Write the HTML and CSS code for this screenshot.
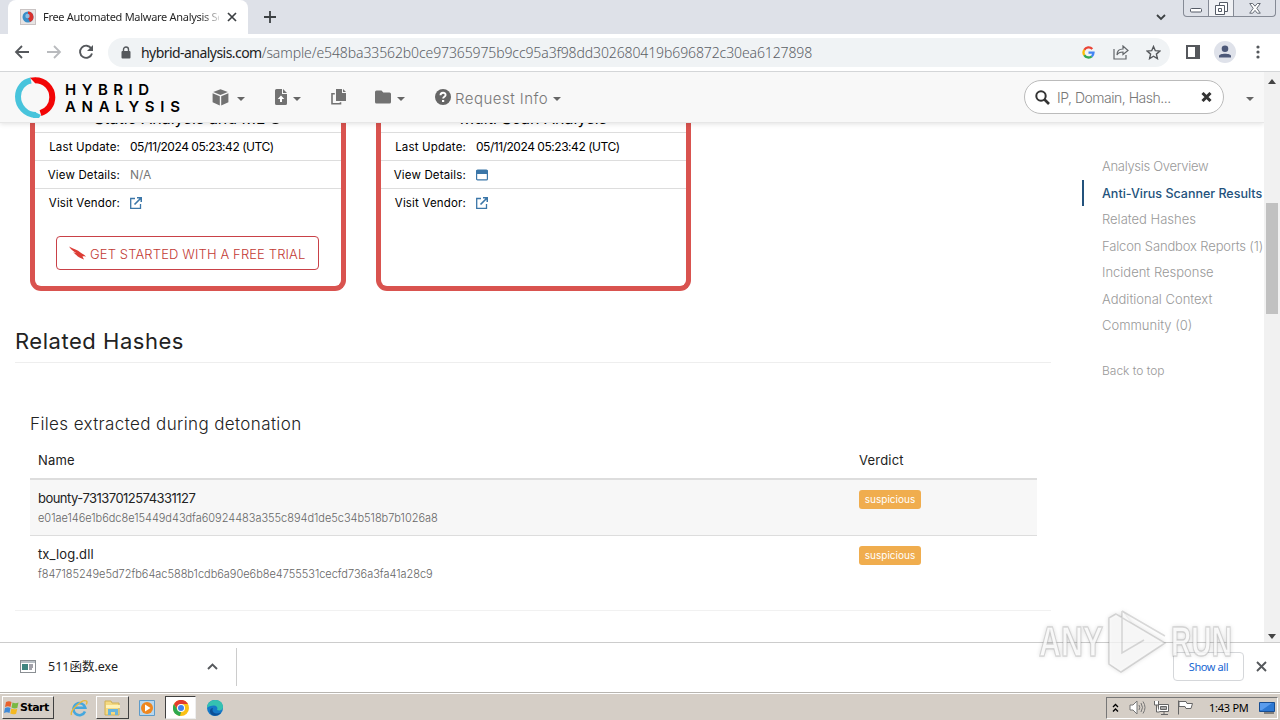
FILE: index.html
```html
<!DOCTYPE html>
<html lang="en">
<head>
    <meta charset="UTF-8">
    <meta name="viewport" content="width=device-width, initial-scale=1.0">
    <title>Free Automated Malware Analysis Service</title>
    <link rel="stylesheet" href="styles.css">
</head>
<body>
    <div class="tabs">
        <div class="tab">
            <svg class="favicon" width="16" height="16" viewBox="0 0 16 16"><rect x=".5" y=".5" width="15" height="15" fill="#e8e4e4" stroke="#c9c3c3"/><circle cx="8" cy="8" r="5.5" fill="#3a8fc8"/><path d="M8 2.500a5.500 5.500 0 0 1 2 10.600L8 9z" fill="#d9302c"/><circle cx="7.500" cy="7" r="2.200" fill="#8fbbe0"/></svg>
            <span class="tab-title">Free Automated Malware Analysis Se</span>
            <svg width="10" height="10" viewBox="0 0 10 10"><path d="M1 1l8 8M9 1l-8 8" stroke="#3c4043" stroke-width="1.700"/></svg>
        </div>
        <svg class="new-tab" width="12" height="12" viewBox="0 0 12 12"><path d="M6 0v12M0 6h12" stroke="#3c4043" stroke-width="1.800"/></svg>
        <svg class="tab-search" width="10" height="7" viewBox="0 0 10 7"><path d="M1 1l4 4 4-4" fill="none" stroke="#3c4043" stroke-width="1.800"/></svg>
        <div class="window-buttons">
            <span class="minimize"><svg width="12" height="5"><rect x=".5" y=".5" width="11" height="3.500" rx="1" fill="#fff" stroke="#555b66"/></svg></span>
            <span class="restore"><svg width="13" height="13" fill="#fff" stroke="#555b66"><path d="M4.500 3V.5h8v9H10"/><path d="M.5 3.500h9v9h-9z"/><path d="M3.500 6.500h3v3h-3z"/></svg></span>
            <span class="close"><svg width="12" height="11" viewBox="0 0 12 11"><path d="M.7.5h3L6 3.200 8.300.5h3L7.800 5.300l3.500 4.900h-3L6 7.400l-2.300 2.800h-3l3.500-4.900z" fill="#fff" stroke="#666c76"/></svg></span>
        </div>
    </div>

    <div class="toolbar">
        <svg class="back" width="16" height="14" viewBox="0 0 16 14" fill="none" stroke="#55585c" stroke-width="1.800"><path d="M15 7H2M8 1L2 7l6 6"/></svg>
        <svg class="forward" width="16" height="14" viewBox="0 0 16 14" fill="none" stroke="#b9bbbe" stroke-width="1.800"><path d="M1 7h13M8 1l6 6-6 6"/></svg>
        <svg class="reload" width="16" height="16" viewBox="0 0 16 16"><path d="M13.300 4.500A6.100 6.100 0 1 0 14 9.500" fill="none" stroke="#55585c" stroke-width="1.900"/><path d="M15 1v6H9z" fill="#55585c"/></svg>
        <div class="address">
            <svg width="10" height="13" viewBox="0 0 10 13"><path d="M2.500 6V3.500a2.500 2.500 0 0 1 5 0V6" fill="none" stroke="#55585c" stroke-width="1.400"/><rect x=".5" y="5" width="9" height="7.500" rx="1" fill="#55585c"/></svg>
            <span class="url"><b>hybrid-analysis.com</b>/sample/e548ba33562b0ce97365975b9cc95a3f98dd302680419b696872c30ea6127898</span>
            <svg class="google" width="13" height="13" viewBox="0 0 13 13" fill="none" stroke-width="2.300"><path d="M10.300 3A5 5 0 0 0 2.300 3.800" stroke="#ea4335"/><path d="M2.300 3.800a5 5 0 0 0 0 5.300" stroke="#fbbc05"/><path d="M2.300 9.100a5 5 0 0 0 7.500 1.200" stroke="#34a853"/><path d="M9.800 10.300a5 5 0 0 0 1.700-3.700H6.500" stroke="#4285f4"/></svg>
            <svg class="share" width="16" height="15" viewBox="0 0 16 15" fill="none" stroke="#62666a" stroke-width="1.200"><path d="M1 4v10h12v-4"/><path d="M4 10c0-4 2-6 6-6V1l5 4.500L10 9.500V7C7 7 5 8 4 10z"/></svg>
            <svg class="star" width="15" height="15" viewBox="0 0 15 15"><path d="M7.500 1.500l1.800 4.200 4.600.4-3.500 3 1 4.500-3.900-2.400-3.900 2.400 1-4.500-3.500-3 4.600-.4z" fill="none" stroke="#55585c" stroke-width="1.400"/></svg>
        </div>
        <svg class="side-panel" width="14" height="14"><path d="M1 1h12v12H1z" fill="none" stroke="#55585c" stroke-width="2"/><path d="M9 1h4v12H9z" fill="#55585c"/></svg>
        <svg class="avatar" width="22" height="22" viewBox="0 0 22 22"><circle cx="11" cy="11" r="11" fill="#dfe2ea"/><circle cx="11" cy="7.700" r="3.300" fill="#4c5878"/><path d="M5 16.500v-1.500c0-3 12-3 12 0v1.500z" fill="#4c5878"/></svg>
        <svg class="more" width="4" height="14" fill="#55585c"><circle cx="2" cy="2" r="1.600"/><circle cx="2" cy="7" r="1.600"/><circle cx="2" cy="12" r="1.600"/></svg>
    </div>

    <div class="viewport">
        <div class="page">
            <div class="navbar">
                <div class="brand">
                    <svg width="41" height="41" viewBox="0 0 41 41"><path d="M16 3.500C8 5 3 12 3 19.500 3 29.500 11 38 21 38" fill="none" stroke="#48c4dc" stroke-width="6"/><path d="M20 35l6 3-2 3h-6z" fill="#48c4dc"/><path d="M20 3.200c10 0 17.300 7.800 17.300 17 0 7.600-4.800 13.800-11.800 16" fill="none" stroke="#f20506" stroke-width="6"/><path d="M15 .8L20.200.2v6z" fill="#f20506"/></svg>
                    <div class="brand-name"><div class="hybrid">HYBRID</div><div class="analysis">ANALYSIS</div></div>
                </div>
                <div class="nav-item cube">
                    <svg width="17" height="17" viewBox="0 0 17 17" fill="#727272"><path d="M8.500.3l7.300 2.800-7.300 3-7.300-3z"/><path d="M.6 4.300l7.200 3v9.200L.6 13.300zM16.400 4.300l-7.200 3v9.200l7.200-3.200z"/></svg><i class="caret"></i>
                </div>
                <div class="nav-item upload">
                    <svg width="12" height="16" viewBox="0 0 12 16"><path d="M1.500 0H7v5h5v9.500q0 1.500-1.500 1.500h-9Q0 16 0 14.500v-13Q0 0 1.500 0z" fill="#727272"/><path d="M8 0l4 4H8z" fill="#727272"/><path d="M6 6.500l3.300 3.600H7V13H5v-2.900H2.700z" fill="#fff"/></svg><i class="caret"></i>
                </div>
                <div class="nav-item copy">
                    <svg width="15" height="16" viewBox="0 0 15 16"><path d="M5 0h6v4h4v8H5z" fill="#727272"/><path d="M12 0l3 3h-3z" fill="#727272"/><path d="M3.800 4.700H1v10h8.500v-1.500" fill="none" stroke="#727272" stroke-width="1.600"/></svg>
                </div>
                <div class="nav-item folder">
                    <svg width="16" height="14" viewBox="0 0 16 14"><path d="M1.500.5h5L8.300 2.500h6.200q1.500 0 1.500 1.500v8q0 1.500-1.500 1.500h-13Q0 13.500 0 12V2Q0 .5 1.500.5z" fill="#727272"/></svg><i class="caret"></i>
                </div>
                <div class="nav-item request">
                    <svg width="16" height="16" viewBox="0 0 16 16"><circle cx="8" cy="8" r="8" fill="#666"/><path d="M5.500 6.200C5.500 3 10.600 3 10.600 6 10.600 7.800 8.100 7.600 8.100 9.600" fill="none" stroke="#fff" stroke-width="1.900"/><path d="M7 11h2.200v2H7z" fill="#fff"/></svg><span>Request Info</span><i class="caret"></i>
                </div>
                <div class="search">
                    <svg width="15" height="15" viewBox="0 0 15 15" fill="none" stroke="#333"><circle cx="6" cy="6" r="4.700" stroke-width="2"/><path d="M9.500 9.500l4.500 4.500" stroke-width="2.600"/></svg>
                    <span>IP, Domain, Hash...</span>
                    <svg width="11" height="10" viewBox="0 0 11 10"><path d="M1.500 1l8 8M9.500 1l-8 8" stroke="#333" stroke-width="3"/></svg>
                </div>
                <i class="caret user-caret"></i>
            </div>

            <div class="scroll-area">
                <div class="content">
                    <div class="cards">
                        <div class="card">
                            <div class="card-title">Static Analysis and ML <svg width="13" height="13"><circle cx="6.500" cy="6.500" r="6.500"/></svg></div>
                            <div class="row"><span class="label">Last Update:</span><span class="date">05/11/2024 05:23:42 (UTC)</span></div>
                            <div class="row"><span class="label">View Details:</span><span class="none">N/A</span></div>
                            <div class="row"><span class="label">Visit Vendor:</span><svg width="12" height="12" viewBox="0 0 12 12" fill="none" stroke="#3b76a8" stroke-width="1.300"><path d="M5 1.500H.7v9.800h9.800V7"/><path d="M4.500 7.500L11 1M7 .7h4.300V5" stroke-width="1.600"/></svg></div>
                            <div class="trial"><svg width="17" height="14" viewBox="0 0 17 14" fill="#dc3c35"><path d="M0 .5c5 2.500 8.500 3.500 11.500 6 1.500 1.500 3.500 1.500 5.500 4.300-2-.7-3-.6-3.500-.3L15 13.500c-2.500-1.500-4.500-1.500-6.500-3.300C7 8.800 6 8 4 6c1.500.8 2.500 1 3.500 1.200C5 5.500 2 4 0 .5z"/></svg><span>GET STARTED WITH A FREE TRIAL</span></div>
                        </div>
                        <div class="card">
                            <div class="card-title">Multi Scan Analysis</div>
                            <div class="row"><span class="label">Last Update:</span><span class="date">05/11/2024 05:23:42 (UTC)</span></div>
                            <div class="row"><span class="label">View Details:</span><svg width="12" height="12" viewBox="0 0 12 12"><rect x=".6" y="1.100" width="10.800" height="9.800" rx="1" fill="#fff" stroke="#3b76a8" stroke-width="1.200"/><path d="M.5 1h11v4H.5z" fill="#3b76a8"/></svg></div>
                            <div class="row"><span class="label">Visit Vendor:</span><svg width="12" height="12" viewBox="0 0 12 12" fill="none" stroke="#3b76a8" stroke-width="1.300"><path d="M5 1.500H.7v9.800h9.800V7"/><path d="M4.500 7.500L11 1M7 .7h4.300V5" stroke-width="1.600"/></svg></div>
                        </div>
                    </div>

                    <h2>Related Hashes</h2>
                    <div class="hashes">
                        <h3>Files extracted during detonation</h3>
                        <div class="table-row head"><div>Name</div><div>Verdict</div></div>
                        <div class="table-row striped">
                            <div><div class="file">bounty-73137012574331127</div><div class="hash">e01ae146e1b6dc8e15449d43dfa60924483a355c894d1de5c34b518b7b1026a8</div></div>
                            <div><span class="badge">suspicious</span></div>
                        </div>
                        <div class="table-row">
                            <div><div class="file dll">tx_log.dll</div><div class="hash">f847185249e5d72fb64ac588b1cdb6a90e6b8e4755531cecfd736a3fa41a28c9</div></div>
                            <div><span class="badge">suspicious</span></div>
                        </div>
                    </div>
                </div>

                <div class="side-nav">
                    <div class="link overview">Analysis Overview</div>
                    <div class="link active">Anti-Virus Scanner Results</div>
                    <div class="link">Related Hashes</div>
                    <div class="link reports">Falcon Sandbox Reports (1)</div>
                    <div class="link">Incident Response</div>
                    <div class="link">Additional Context</div>
                    <div class="link">Community (0)</div>
                    <div class="top">Back to top</div>
                </div>
            </div>
        </div>
        <div class="scrollbar">
            <svg width="8" height="5"><path d="M0 5l4-5 4 5z" fill="#444"/></svg>
            <div class="thumb"></div>
            <svg width="8" height="5"><path d="M0 0l4 5 4-5z" fill="#444"/></svg>
        </div>
    </div>

    <div class="downloads">
        <div class="download">
            <svg width="16" height="13"><rect x=".5" y=".5" width="15" height="12" fill="#fff" stroke="#8a8f93"/><path d="M1 1h14v2H1z" fill="#b9c0c6"/><path d="M2 4h6v6H2z" fill="#3f8580"/><path d="M9 5h4M9 7h4M9 9h3" stroke="#445"/></svg>
            <span>511函数.exe</span>
            <svg width="11" height="7" viewBox="0 0 11 7"><path d="M1 6l4.500-4.500L10 6" fill="none" stroke="#55585c" stroke-width="1.900"/></svg>
        </div>
        <div class="show-all">Show all</div>
        <svg width="11" height="11" viewBox="0 0 11 11"><path d="M1 1l9 9M10 1l-9 9" stroke="#55585c" stroke-width="1.900"/></svg>
    </div>

    <div class="taskbar">
        <div class="start">
            <svg width="16" height="16" viewBox="0 0 16 16"><path d="M2 2q3-1.500 5.500 0L6.500 7Q4 5.500 1 7z" fill="#e8612c"/><path d="M8.500 2.500q3 1.500 6 0L13.300 8q-3 1-5.800-.5z" fill="#79b843"/><path d="M1 8q3-1.300 5.500 0l-1 5Q3 11.700 0 13z" fill="#3f8ad8"/><path d="M7.300 8.500q3 1.500 6 .3l-1.200 5q-3 1.200-5.800-.3z" fill="#f5b921"/></svg>
            <b>Start</b>
        </div>
        <div class="task ie"><svg width="18" height="18" viewBox="0 0 18 18" fill="none"><path d="M15 12.500A6 6 0 1 1 15.300 8.800H4" stroke="#45a7de" stroke-width="2.600"/><path d="M1.500 16C-.5 12 12-.5 16.500 2c1 .7.5 2-.2 3.500" stroke="#e8b83a" stroke-width="1.400"/></svg></div>
        <div class="task raised"><svg width="17" height="17" viewBox="0 0 17 17"><path d="M1 2h6l1 2h7v12H1z" fill="#f4d981" stroke="#cfb057"/><path d="M2 6h14v3H2z" fill="#fff3b8"/><path d="M4 16v-6h10v6h-3v-3H7v3z" fill="#69b5dd"/></svg></div>
        <div class="task media"><svg width="16" height="16"><path d="M.5.5h15v15H.5z" fill="#b8d7ee" stroke="#5e9bc9"/><circle cx="8" cy="8" r="6" fill="#ef871f"/><path d="M6 4.500l5.500 3.500L6 11.500z" fill="#fff"/></svg></div>
        <div class="task pressed"><svg width="16" height="16" viewBox="0 0 16 16"><circle cx="8" cy="8" r="8" fill="#fbc116"/><path d="M1 4a8 8 0 0 1 14 0H8L5 10z" fill="#e33b2e"/><path d="M1 4l3.700 6.200L8 12l-1 4A8 8 0 0 1 1 4z" fill="#2da94f"/><circle cx="8" cy="8" r="4" fill="#fff"/><circle cx="8" cy="8" r="3" fill="#4182ed"/></svg></div>
        <div class="task edge"><svg width="16" height="16" viewBox="0 0 16 16"><circle cx="8" cy="8" r="8" fill="#1679c8"/><path d="M0 8C0-2.500 16-2.500 16 7c0 3-3 4-6 3 1-2 0-4.500-3-4.500C4 5.500 1 6.500 0 8z" fill="#35c1b1"/><path d="M6 8c-2 4 2 7 8 4.500C11 17 4 17 3 12c-.4-2 1-4 3-4z" fill="#0d4f96"/></svg></div>
        <div class="tray">
            <svg class="chevrons" width="7" height="10" fill="none" stroke="#000" stroke-width="1.300"><path d="M1 4l2.500-2.500L6 4M1 8.500L3.500 6 6 8.500"/></svg>
            <svg class="sound" width="17" height="15" viewBox="0 0 17 15" fill="none" stroke="#777"><path d="M1 5h3l4-4v13l-4-4H1z" fill="#fff"/><path d="M10 5q1.500 2.500 0 5M12 3q3 4.500 0 9M14 1.500q4 6 0 12"/></svg>
            <svg class="network" width="17" height="16" fill="#fff" stroke="#666"><path d="M5.500 4.500h10v7h-10z"/><path d="M7.500 6.500h6v3h-6z" fill="#aaa"/><path d="M1.500 1v4h4V1M3.500 5v7h3M8 14.500h7M11 12v2"/></svg>
            <svg class="flag" width="17" height="15" fill="#fff" stroke="#666"><path d="M1.500.5v14M2 1.500h7l1 2h5.500l-1.500 5H9l-1-2H2z"/></svg>
            <span>1:43 PM</span>
            <svg class="desktop" width="16" height="12"><path d="M.5.5h15v9H.5z" fill="#2d78d3" stroke="#174d92"/><path d="M1 1h12L3 8H1z" fill="#5a9ced"/><path d="M5 11h10" stroke="#333"/></svg>
        </div>
    </div>

    <svg class="watermark" width="204" height="70" viewBox="0 0 204 70">
        <text x="5" y="50" textLength="64" lengthAdjust="spacingAndGlyphs">ANY</text>
        <path d="M82 8L75 12v46l12 8 44-29z M88 5v42l22-13M88 5l43 25"/>
        <text x="137" y="50" textLength="61" lengthAdjust="spacingAndGlyphs">RUN</text>
    </svg>
</body>
</html>
```
FILE: styles.css
```css
*
{
    box-sizing: border-box;
}
body
{
    margin: 0;
    width: 1280px;
    height: 720px;
    overflow: hidden;
    position: relative;
    background-color: #fff;
    font-family: Inter, "Noto Sans", sans-serif;
    color: #222;
}
svg
{
    flex: none;
    display: block;
}

/* Browser window */
.tabs
{
    height: 34px;
    background-color: #dee1e8;
    display: flex;
    align-items: center;
    padding-left: 8px;
}
.tab
{
    width: 240px;
    height: 34px;
    background-color: #fff;
    border-radius: 8px 8px 0 0;
    display: flex;
    align-items: center;
    padding: 0 11px 0 12px;
}
.tab-title
{
    font: 11px/16px "Noto Sans", sans-serif;
    letter-spacing: -0.29px;
    width: 176px;
    margin: 0 8px 0 7px;
    white-space: nowrap;
    overflow: hidden;
    flex: none;
    background-image: linear-gradient(90deg, #222 158px, #fff 180px);
    background-clip: text;
    color: transparent;
}
.new-tab
{
    margin-left: 16px;
}
.tab-search
{
    margin-left: auto;
}
.window-buttons
{
    display: flex;
    align-self: flex-start;
    width: 93px;
    height: 17px;
    margin: 0 4px 0 17px;
    border: 1px solid #858a95;
    border-top: none;
    border-radius: 0 0 4px 4px;
}
.window-buttons span
{
    display: flex;
    align-items: center;
    justify-content: center;
    width: 25px;
    border-right: 1px solid #858a95;
}
.window-buttons .minimize svg
{
    margin-top: 4px;
}
.window-buttons .restore
{
    background-color: #f0f1f4;
}
.window-buttons .close
{
    width: 41px;
    border: none;
}
.toolbar
{
    height: 38px;
    display: flex;
    align-items: center;
    padding: 0 20px 2px 14px;
    border-bottom: 1px solid #d4d6d8;
}
.forward
{
    margin-left: 16px;
}
.reload
{
    margin: 0 14px 0 16px;
}
.address
{
    flex: 1;
    height: 29px;
    border-radius: 15px;
    background-color: #f0f3f5;
    display: flex;
    align-items: center;
    padding: 0 9px 0 13px;
    margin-top: 2px;
}
.url
{
    font: 300 14px/20px "Noto Sans", sans-serif;
    letter-spacing: -0.11px;
    color: #5b6065;
    margin-left: 10px;
    white-space: nowrap;
}
.url b
{
    font-weight: 400;
    letter-spacing: -0.55px;
    color: #222;
}
.google
{
    margin-left: auto;
}
.share
{
    margin: 0 17px 0 18px;
}
.side-panel
{
    margin: 0 14px 0 16px;
}
.more
{
    margin-left: 20px;
}

/* Web page */
.viewport
{
    height: 570px;
    display: flex;
}
.page
{
    width: 1264px;
    overflow: hidden;
}
.navbar
{
    height: 51px;
    background-color: #f8f8f8;
    border-bottom: 1px solid #e7e7e7;
    box-shadow: 0 1px 5px rgba(0, 0, 0, 0.12);
    position: relative;
    z-index: 1;
    display: flex;
    align-items: center;
    padding: 0 10px 0 15px;
    color: #777;
}
.brand
{
    display: flex;
    align-items: center;
    gap: 9px;
    width: 197px;
}
.brand-name
{
    font-size: 15px;
    line-height: 17px;
    font-weight: 600;
    color: #000;
    margin-top: 1px;
}
.hybrid
{
    letter-spacing: 5.5px;
}
.analysis
{
    letter-spacing: 5.7px;
}
.nav-item
{
    display: flex;
    align-items: center;
}
.caret
{
    border: 4px solid transparent;
    border-top-color: #666;
    border-bottom: none;
    margin: 4px 0 0 8px;
}
.upload
{
    margin-left: 30px;
}
.upload .caret
{
    margin-left: 6px;
}
.copy
{
    margin-left: 30px;
}
.folder
{
    margin-left: 29px;
}
.folder .caret
{
    margin-left: 6px;
}
.request
{
    margin-left: 30px;
    font-size: 15px;
    font-weight: 300;
    letter-spacing: 0.48px;
}
.request span
{
    margin: 2px 0 0 4px;
}
.request .caret
{
    margin-left: 5px;
}
.search
{
    width: 200px;
    height: 34px;
    border: 1px solid #bbb;
    border-radius: 17px;
    background-color: #fff;
    display: flex;
    align-items: center;
    padding: 0 11px 0 10px;
    margin: 0 22px 0 auto;
    font-size: 14px;
    font-weight: 300;
    letter-spacing: -0.48px;
}
.search span
{
    flex: 1;
    margin: 1px 0 0 7px;
}
.user-caret
{
    margin-left: 0;
}
.scroll-area
{
    display: flex;
    height: 519px;
    overflow: hidden;
}
.content
{
    width: 1051px;
    padding-left: 15px;
    flex: none;
}
.cards
{
    display: flex;
    gap: 30px;
    margin: -20px 0 0 15px;
}
.card
{
    width: 316px;
    height: 188px;
    border: 5px solid #d9534f;
    border-top: none;
    border-radius: 0 0 11px 11px;
}
.card + .card
{
    width: 315px;
}
.card-title
{
    height: 29px;
    font-size: 16px;
    line-height: 30px;
    color: #000;
    display: flex;
    justify-content: center;
    align-items: center;
    gap: 4px;
}
.row
{
    height: 28px;
    border-top: 1px solid #ddd;
    display: flex;
    align-items: center;
    font-size: 12px;
    color: #000;
    padding-right: 14px;
}
.label
{
    width: 85px;
    text-align: right;
    margin-right: 10px;
    font-size: 11.5px;
    letter-spacing: 0.17px;
}
.date
{
    letter-spacing: -0.46px;
}
.none
{
    color: #777;
}
.trial
{
    width: 263px;
    height: 34px;
    margin: 20px 0 0 21px;
    border: 1px solid #c94148;
    border-radius: 4px;
    color: #c23934;
    display: flex;
    align-items: center;
    padding: 0 12px;
    font-size: 13px;
    font-weight: 300;
    letter-spacing: 0.13px;
    white-space: nowrap;
}
.trial span
{
    margin: 2px 0 0 4px;
}
h2
{
    margin: 32px 0 0;
    height: 40px;
    border-bottom: 1px solid #eee;
    font-size: 22px;
    line-height: 36px;
    font-weight: 400;
    letter-spacing: 0.53px;
}
.hashes
{
    height: 248px;
    padding: 48px 14px 0 15px;
    border-bottom: 1px solid #f1f1f1;
}
h3
{
    margin: 0;
    font-size: 17px;
    line-height: 26px;
    height: 31px;
    font-weight: 300;
    letter-spacing: 0.38px;
}
.table-row
{
    height: 56px;
    display: flex;
    padding: 9px 8px 0;
}
.table-row > div:first-child
{
    width: 821px;
}
.table-row.head
{
    height: 38px;
    padding-top: 8px;
    border-bottom: 2px solid #ddd;
    font-size: 13px;
    line-height: 20px;
    letter-spacing: 0.2px;
}
.striped
{
    background-color: #f7f7f7;
    border-bottom: 1px solid #ddd;
}
.file
{
    font-size: 13px;
    line-height: 19px;
    letter-spacing: -0.53px;
}
.file.dll
{
    letter-spacing: 0.1px;
}
.hash
{
    font-size: 11px;
    line-height: 19px;
    margin-top: 1px;
    font-weight: 300;
    color: #666;
    letter-spacing: -0.02px;
}
.badge
{
    display: block;
    width: 62px;
    height: 19px;
    margin-top: 1px;
    border-radius: 3px;
    background-color: #f0ad4e;
    color: #fff;
    font-size: 10px;
    line-height: 19px;
    text-align: center;
}
.side-nav
{
    padding: 30px 0 0 31px;
    font-size: 13px;
    font-weight: 300;
    color: #999;
    white-space: nowrap;
}
.link
{
    height: 26.5px;
    line-height: 26px;
    padding-left: 20px;
}
.overview
{
    letter-spacing: -0.3px;
}
.link.active
{
    color: #23527c;
    font-weight: 500;
    font-size: 12.5px;
    line-height: 28px;
    background: linear-gradient(#23527c, #23527c) 0 0 / 2px 26px no-repeat;
}
.reports
{
    letter-spacing: -0.14px;
}
.top
{
    margin-top: 19px;
    padding-left: 20px;
    font-size: 12px;
    line-height: 26px;
}
.scrollbar
{
    width: 16px;
    background-color: #f1f1f1;
    display: flex;
    flex-direction: column;
    align-items: center;
    padding: 7px 0 3px;
}
.thumb
{
    width: 12px;
    height: 111px;
    margin: 119px 0 auto;
    background-color: #c1c1c1;
}

/* Download shelf */
.downloads
{
    height: 50px;
    border-top: 1px solid #ccc;
    display: flex;
    align-items: center;
    padding: 0 13px 2px 0;
}
.download
{
    width: 237px;
    height: 38px;
    border-right: 1px solid #ccc;
    display: flex;
    align-items: center;
    padding: 0 18px 0 20px;
}
.download span
{
    flex: 1;
    margin-left: 12px;
    font: 12.5px/20px "Noto Sans", "Noto Sans CJK SC", sans-serif;
}
.show-all
{
    width: 71px;
    height: 29px;
    margin: 0 12px 0 auto;
    border: 1px solid #d5d7da;
    border-radius: 4px;
    color: #1967d2;
    font: 11px/27px "Noto Sans", sans-serif;
    letter-spacing: -0.4px;
    text-align: center;
}

/* Taskbar */
.taskbar
{
    height: 28px;
    background-color: #d5cec6;
    border-top: 1px solid #b8b5b0;
    box-shadow: inset 0 1px #fff;
    display: flex;
    align-items: center;
    padding: 2px 2px 0;
}
.start
{
    width: 52px;
    height: 23px;
    border: 1px solid #fff;
    border-right-color: #404040;
    border-bottom-color: #404040;
    display: flex;
    align-items: center;
    padding-left: 1px;
    color: #000;
    font: bold 11px "DejaVu Sans", sans-serif;
    letter-spacing: -0.5px;
}
.task
{
    height: 23px;
    display: flex;
    align-items: center;
    justify-content: center;
}
.ie
{
    width: 18px;
    margin: 0 8px 0 16px;
}
.raised
{
    width: 33px;
    border: 1px solid #fff;
    border-right-color: #404040;
    border-bottom-color: #404040;
}
.media
{
    margin: 0 10px;
}
.pressed
{
    width: 31px;
    background-color: #fff;
    border: 1px solid #404040;
    border-right-color: #eee;
    border-bottom-color: #eee;
}
.edge
{
    margin-left: 11px;
}
.tray
{
    width: 172px;
    height: 22px;
    margin-left: auto;
    border: 1px solid #777;
    border-right-color: #fff;
    border-bottom-color: #fff;
    display: flex;
    align-items: center;
    padding-left: 5px;
    color: #000;
    font: 11px "Noto Sans", sans-serif;
}
.sound
{
    margin-left: 10px;
}
.network
{
    margin: 0 7px;
}
.tray span
{
    width: 40px;
    margin: 0 10px 0 15px;
    letter-spacing: -0.25px;
    white-space: nowrap;
}

/* Laid over the page and the shelf */
.watermark
{
    position: absolute;
    left: 1034px;
    top: 606px;
    fill: rgba(255, 255, 255, 0.75);
    stroke: rgba(110, 110, 110, 0.25);
    stroke-width: 1.5px;
    font: bold 43px "Liberation Sans", sans-serif;
    filter: drop-shadow(0 0 2px rgba(0, 0, 0, 0.2));
}
```
